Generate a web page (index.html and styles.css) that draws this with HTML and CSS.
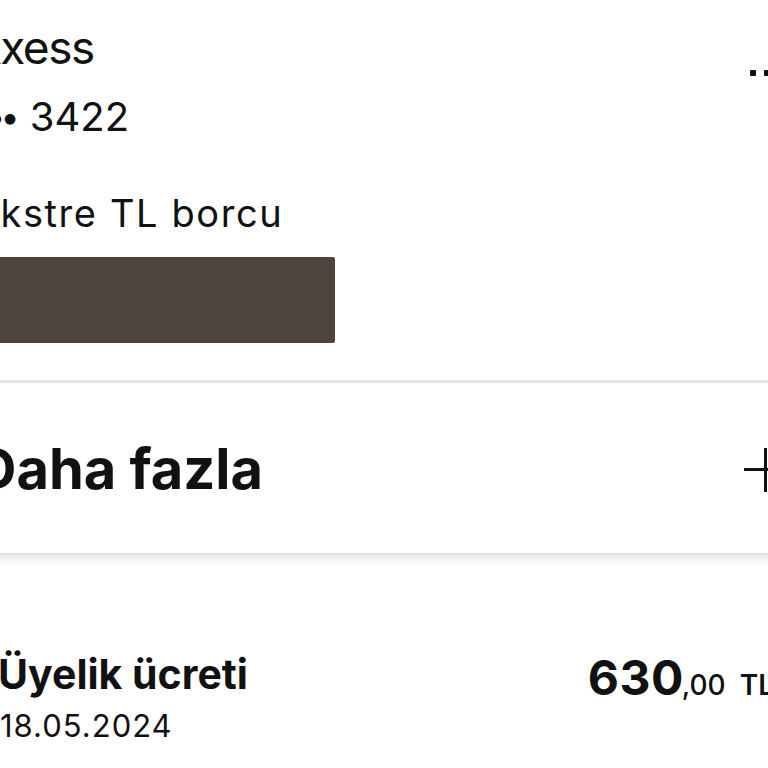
FILE: index.html
```html
<!DOCTYPE html>
<html lang="tr">

<head>
    <meta charset="UTF-8">
    <meta name="viewport" content="width=device-width, initial-scale=1.0">
    <title>Axess - Kart Detayı</title>
    <link rel="stylesheet" href="styles.css">
</head>

<body>
    <div class="ekran">
        <!-- Kart özeti -->
        <div class="kart-ozet">
            <div class="kart-baslik">
                <div>
                    <div class="kart-adi">Axess</div>
                    <div class="kart-no"><span class="kart-no-gizli">••••</span> 3422</div>
                </div>
                <div class="menu-noktalar">
                    <span></span><span></span><span></span>
                </div>
            </div>

            <div class="borc-etiket">Ekstre TL borcu</div>
            <div class="borc-gizli"></div>
        </div>

        <!-- Daha fazla -->
        <div class="daha-fazla">
            <span class="daha-fazla-yazi">Daha fazla</span>
            <span class="arti"></span>
        </div>

        <!-- Hareketler -->
        <div class="hareket">
            <div>
                <div class="hareket-adi">Üyelik ücreti</div>
                <div class="hareket-tarih">18.05.2024</div>
            </div>
            <div class="tutar">
                <span class="tutar-tam">630</span><span class="tutar-kurus">,00</span><span class="tutar-birim">TL</span>
            </div>
        </div>
    </div>
</body>

</html>
```

FILE: styles.css
```css
body {
    margin: 0;
    font-family: Inter, "Noto Sans", sans-serif;
    color: #111;
    background-color: #fff;
    overflow: hidden;
}

.ekran {
    width: 820px;
    margin-left: -24px;
}

.kart-ozet {
    padding: 19px 12px 37px 0;
}

.kart-baslik {
    display: flex;
    justify-content: space-between;
    align-items: flex-start;
}

.kart-adi {
    font-size: 46px;
    line-height: 56px;
    letter-spacing: -1.5px;
    margin-left: -6px;
}

.kart-no {
    font-size: 40px;
    line-height: 48px;
    margin-top: 18px;
    margin-left: -18px;
}

.kart-no-gizli {
    font-size: 34px;
    letter-spacing: -5px;
    margin-right: 4px;
    vertical-align: 2px;
}

.menu-noktalar {
    display: flex;
    gap: 8px;
    margin-top: 51px;
}

.menu-noktalar span {
    width: 6px;
    height: 6px;
    background-color: #111;
    border-radius: 1px;
}

.borc-etiket {
    font-size: 38px;
    line-height: 46px;
    letter-spacing: 1.6px;
    margin-top: 49px;
}

.borc-gizli {
    width: 359px;
    height: 86px;
    margin-top: 21px;
    background-color: #4d453d;
    border-radius: 2px;
}

.daha-fazla {
    display: flex;
    justify-content: space-between;
    align-items: center;
    height: 170px;
    padding-right: 8px;
    border-top: 3px solid #e5e5e5;
    border-bottom: 1px solid #d9d9d9;
    box-shadow: 0 5px 8px rgba(0, 0, 0, 0.1);
}

.daha-fazla-yazi {
    font-size: 56px;
    line-height: 68px;
    font-weight: 700;
    padding-top: 2px;
}

.arti {
    position: relative;
    width: 44px;
    height: 44px;
    margin-top: 4px;
}

.arti::before,
.arti::after {
    content: "";
    position: absolute;
    background-color: #111;
}

.arti::before {
    left: 0;
    right: 0;
    top: 20px;
    height: 3px;
}

.arti::after {
    top: 0;
    bottom: 0;
    left: 20px;
    width: 3px;
}

.hareket {
    display: flex;
    justify-content: space-between;
    align-items: flex-start;
    margin-top: 95px;
    padding: 0 22px 0 24px;
}

.hareket-adi {
    font-size: 41px;
    line-height: 50px;
    font-weight: 700;
    margin-left: -2px;
}

.hareket-tarih {
    font-size: 31px;
    line-height: 38px;
    letter-spacing: 1px;
    margin-top: 8px;
}

.tutar {
    margin-top: 1px;
    line-height: 56px;
    white-space: nowrap;
}

.tutar-tam {
    font-size: 48px;
    font-weight: 700;
    letter-spacing: 0.5px;
}

.tutar-kurus {
    font-size: 28px;
    font-weight: 500;
    margin-left: -2px;
}

.tutar-birim {
    font-size: 28px;
    font-weight: 600;
    margin-left: 14px;
}
```
